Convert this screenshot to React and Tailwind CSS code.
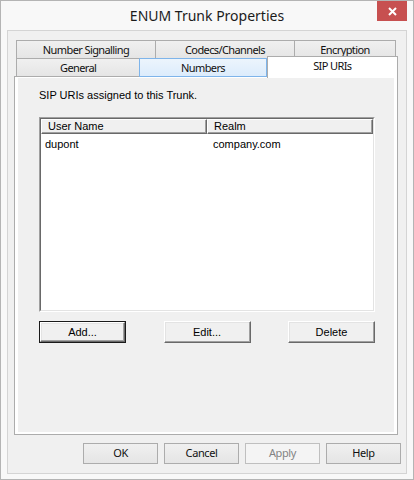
import React from "react";

// Win8-style property sheet with classic controls inside the page

const title = { fontFamily: '"Noto Sans", "Open Sans", sans-serif' };
const ui = { fontFamily: '"Noto Sans", "Open Sans", sans-serif' };
const classic = { fontFamily: '"Liberation Sans", Arial, sans-serif' };

function Tab({ label, width, state = "normal", first = false }) {
  const base =
    "flex items-center justify-center text-[11px] tracking-[-0.6px] text-[#111]";
  if (state === "selected") {
    return (
      <div
        className={`${base} relative z-10 -mt-[2px] -mb-px h-[22px] border border-b-0 border-[#acacac] bg-white pb-[2px]`}
        style={{ width }}
      >
        {label}
      </div>
    );
  }
  const skin =
    state === "hover"
      ? "border-[#7eb4ea] bg-gradient-to-b from-[#ecf4fc] to-[#dcecfc] relative z-[5]"
      : "border-[#acacac] bg-gradient-to-b from-[#f0f0f0] to-[#e5e5e5]";
  return (
    <div
      className={`${base} h-[19px] border pt-px ${skin} ${first ? "" : "-ml-px"}`}
      style={{ width }}
    >
      {label}
    </div>
  );
}

function ClassicButton({ children, isDefault = false }) {
  const face = (
    <div className="flex h-full w-full items-center justify-center border border-t-white border-l-white border-r-[#696969] border-b-[#696969] bg-[#f0f0f0] text-[11px] text-black shadow-[inset_-1px_-1px_0_#a0a0a0,inset_1px_1px_0_#e3e3e3]">
      {children}
    </div>
  );
  return (
    <div
      className={`h-[22px] w-[87px] ${isDefault ? "border border-[#1a1a1a]" : ""}`}
      style={classic}
    >
      {face}
    </div>
  );
}

function DialogButton({ children, disabled = false }) {
  return (
    <div
      className={`flex h-[21px] w-[75px] items-center justify-center border text-[11px] tracking-[-0.4px] ${
        disabled
          ? "border-[#bfbfbf] bg-[#f4f4f4] text-[#838383]"
          : "border-[#acacac] bg-gradient-to-b from-[#f0f0f0] to-[#e5e5e5] text-[#111]"
      }`}
    >
      {children}
    </div>
  );
}

function HeaderCell({ children, width }) {
  return (
    <div
      className="flex h-[15px] items-center border border-t-white border-l-white border-r-[#696969] border-b-[#696969] bg-[#f0f0f0] pl-[6px] shadow-[inset_-1px_-1px_0_#a0a0a0]"
      style={{ width }}
    >
      {children}
    </div>
  );
}

export default function App() {
  return (
    <div
      className="flex h-[480px] w-[414px] flex-col border border-[#b4b4b4] bg-[#f8f8f8]"
      style={ui}
    >
      {/* Title bar */}
      <div className="relative flex h-[29px] items-center justify-center">
        <span className="text-[14px] text-[#1b1b1b]" style={title}>
          ENUM Trunk Properties
        </span>
        <div className="absolute right-[6px] top-0 flex h-[20px] w-[30px] items-center justify-center bg-[#c75050]">
          <svg width="9" height="9" viewBox="0 0 9 9">
            <path d="M1 1 L8 8 M8 1 L1 8" stroke="#fff" strokeWidth="2" />
          </svg>
        </div>
      </div>

      {/* Client area */}
      <div className="mx-[6px] mb-[5px] flex flex-1 flex-col border border-[#d4d4d4] bg-[#f0f0f0] pl-[6px] pt-[9px]">
        {/* Tab strip, two rows */}
        <div className="flex w-[384px] flex-col">
          <div className="ml-[2px] flex">
            <Tab label="Number Signalling" width={140} first />
            <Tab label="Codecs/Channels" width={140} />
            <Tab label="Encryption" width={102} />
          </div>
          <div className="ml-[2px] -mt-px flex">
            <Tab label="General" width={125} first />
            <Tab label="Numbers" width={128} state="hover" />
            <Tab label="SIP URIs" width={132} state="selected" />
          </div>

          {/* Page */}
          <div className="-mt-px h-[359px] border border-[#acacac] bg-white px-[3px] pb-[2px] pt-px">
            <div className="flex h-full flex-col bg-[#f0f0f0] pl-[21px] pt-[11px]" style={classic}>
              <div className="h-[13px] text-[11px] leading-[13px] text-black">
                SIP URIs assigned to this Trunk.
              </div>

              {/* List view */}
              <div className="mt-[15px] h-[195px] w-[336px] border border-t-[#a0a0a0] border-l-[#a0a0a0] border-r-white border-b-white">
                <div className="flex h-full flex-col border border-t-[#696969] border-l-[#696969] border-r-[#e3e3e3] border-b-[#e3e3e3] bg-white text-[11px] text-black">
                  <div className="flex">
                    <HeaderCell width={166}>User Name</HeaderCell>
                    <HeaderCell width={166}>Realm</HeaderCell>
                  </div>
                  <div className="mt-[2px] flex h-[16px] items-center">
                    <div className="w-[166px] pl-[4px]">dupont</div>
                    <div className="pl-[6px]">company.com</div>
                  </div>
                </div>
              </div>

              {/* List actions */}
              <div className="mt-[9px] flex w-[336px] justify-between">
                <ClassicButton isDefault>Add...</ClassicButton>
                <ClassicButton>Edit...</ClassicButton>
                <ClassicButton>Delete</ClassicButton>
              </div>
            </div>
          </div>
        </div>

        {/* Dialog buttons */}
        <div className="mt-[8px] flex justify-end gap-[6px] pr-[5px]">
          <DialogButton>OK</DialogButton>
          <DialogButton>Cancel</DialogButton>
          <DialogButton disabled>Apply</DialogButton>
          <DialogButton>Help</DialogButton>
        </div>
      </div>
    </div>
  );
}
